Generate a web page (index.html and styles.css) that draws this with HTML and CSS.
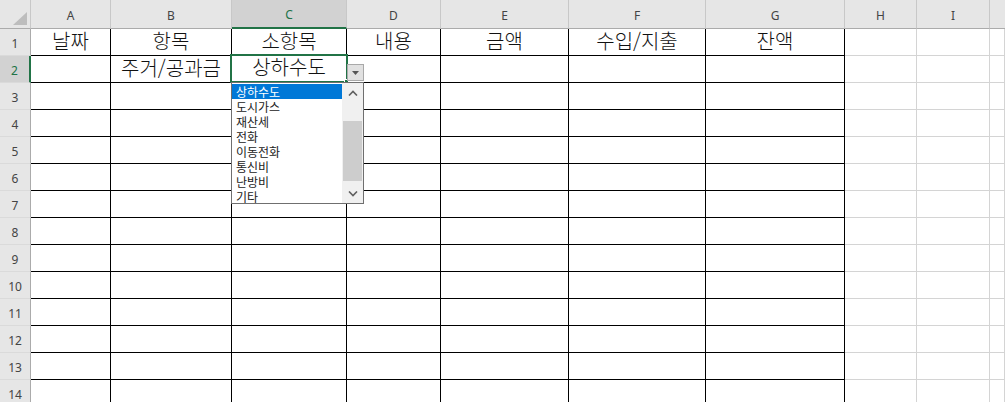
FILE: index.html
```html
<!DOCTYPE html>
<html lang="ko">
<head>
<meta charset="utf-8">
<link rel="stylesheet" href="styles.css">
</head>
<body>
<div class="sheet">
  <div class="row hdrow">
    <div class="corner"><svg width="14" height="13" viewBox="0 0 14 13"><polygon points="14,0 14,13 0,13" fill="#bdbdbd"/></svg></div>
    <div class="ch">A</div><div class="ch">B</div><div class="ch sel">C</div><div class="ch">D</div><div class="ch">E</div><div class="ch">F</div><div class="ch">G</div><div class="ch">H</div><div class="ch">I</div><div class="ch last"></div>
  </div>
  <div class="row">
    <div class="rh">1</div>
    <div class="c t">날짜</div><div class="c t">항목</div><div class="c t">소항목</div><div class="c t">내용</div><div class="c t">금액</div><div class="c t">수입/지출</div><div class="c t">잔액</div><div class="c"></div><div class="c"></div><div class="c"></div>
  </div>
  <div class="row">
    <div class="rh rsel">2</div>
    <div class="c t"></div><div class="c t">주거/공과금</div><div class="c t up">상하수도</div><div class="c t"></div><div class="c t"></div><div class="c t"></div><div class="c t"></div><div class="c"></div><div class="c"></div><div class="c"></div>
  </div>
  <div class="row"><div class="rh">3</div><div class="c t"></div><div class="c t"></div><div class="c t"></div><div class="c t"></div><div class="c t"></div><div class="c t"></div><div class="c t"></div><div class="c"></div><div class="c"></div><div class="c"></div></div>
  <div class="row"><div class="rh">4</div><div class="c t"></div><div class="c t"></div><div class="c t"></div><div class="c t"></div><div class="c t"></div><div class="c t"></div><div class="c t"></div><div class="c"></div><div class="c"></div><div class="c"></div></div>
  <div class="row"><div class="rh">5</div><div class="c t"></div><div class="c t"></div><div class="c t"></div><div class="c t"></div><div class="c t"></div><div class="c t"></div><div class="c t"></div><div class="c"></div><div class="c"></div><div class="c"></div></div>
  <div class="row"><div class="rh">6</div><div class="c t"></div><div class="c t"></div><div class="c t"></div><div class="c t"></div><div class="c t"></div><div class="c t"></div><div class="c t"></div><div class="c"></div><div class="c"></div><div class="c"></div></div>
  <div class="row"><div class="rh">7</div><div class="c t"></div><div class="c t"></div><div class="c t"></div><div class="c t"></div><div class="c t"></div><div class="c t"></div><div class="c t"></div><div class="c"></div><div class="c"></div><div class="c"></div></div>
  <div class="row"><div class="rh">8</div><div class="c t"></div><div class="c t"></div><div class="c t"></div><div class="c t"></div><div class="c t"></div><div class="c t"></div><div class="c t"></div><div class="c"></div><div class="c"></div><div class="c"></div></div>
  <div class="row"><div class="rh">9</div><div class="c t"></div><div class="c t"></div><div class="c t"></div><div class="c t"></div><div class="c t"></div><div class="c t"></div><div class="c t"></div><div class="c"></div><div class="c"></div><div class="c"></div></div>
  <div class="row"><div class="rh">10</div><div class="c t"></div><div class="c t"></div><div class="c t"></div><div class="c t"></div><div class="c t"></div><div class="c t"></div><div class="c t"></div><div class="c"></div><div class="c"></div><div class="c"></div></div>
  <div class="row"><div class="rh">11</div><div class="c t"></div><div class="c t"></div><div class="c t"></div><div class="c t"></div><div class="c t"></div><div class="c t"></div><div class="c t"></div><div class="c"></div><div class="c"></div><div class="c"></div></div>
  <div class="row"><div class="rh">12</div><div class="c t"></div><div class="c t"></div><div class="c t"></div><div class="c t"></div><div class="c t"></div><div class="c t"></div><div class="c t"></div><div class="c"></div><div class="c"></div><div class="c"></div></div>
  <div class="row"><div class="rh">13</div><div class="c t"></div><div class="c t"></div><div class="c t"></div><div class="c t"></div><div class="c t"></div><div class="c t"></div><div class="c t"></div><div class="c"></div><div class="c"></div><div class="c"></div></div>
  <div class="row"><div class="rh">14</div><div class="c t"></div><div class="c t"></div><div class="c t"></div><div class="c t"></div><div class="c t"></div><div class="c t"></div><div class="c t"></div><div class="c"></div><div class="c"></div><div class="c"></div></div>

  <div class="selbox"></div>
  <div class="handle"></div>
  <div class="ddbtn"><svg width="7" height="4" viewBox="0 0 7 4"><polygon points="0,0 7,0 3.5,4" fill="#555"/></svg></div>
  <div class="ddlist">
    <div class="items">
      <div class="item on">상하수도</div>
      <div class="item">도시가스</div>
      <div class="item">재산세</div>
      <div class="item">전화</div>
      <div class="item">이동전화</div>
      <div class="item">통신비</div>
      <div class="item">난방비</div>
      <div class="item">기타</div>
    </div>
    <div class="sbar">
      <div class="sbtn"><svg width="10" height="6" viewBox="0 0 10 6"><polyline points="1,5.5 5,1.5 9,5.5" fill="none" stroke="#606060" stroke-width="1.6"/></svg></div>
      <div class="track"><div class="gap1"></div><div class="thumb"></div><div class="gap2"></div></div>
      <div class="sbtn"><svg width="10" height="6" viewBox="0 0 10 6"><polyline points="1,0.5 5,4.5 9,0.5" fill="none" stroke="#606060" stroke-width="1.6"/></svg></div>
    </div>
  </div>
</div>
</body>
</html>
```

FILE: styles.css
```css
* { box-sizing: border-box; }
html, body { margin: 0; padding: 0; background: #fff; }
body { width: 1005px; height: 402px; overflow: hidden; }

.sheet {
  position: relative;
  width: 1005px;
  font-family: "Noto Sans CJK KR", "Noto Sans", sans-serif;
}

.row {
  display: grid;
  grid-template-columns: 31px 80px 121px 115px 94px 128px 137px 139px 72px 73px 1fr;
  height: 27px;
}
.hdrow { height: 29px; }

.corner {
  background: #e6e6e6;
  border-right: 1px solid #c8c8c8;
  border-bottom: 1px solid #ababab;
  display: flex;
  align-items: flex-end;
  justify-content: flex-end;
  padding: 0 3px 3px 0;
}
.ch {
  background: #e6e6e6;
  border-right: 1px solid #c8c8c8;
  border-bottom: 1px solid #ababab;
  display: flex;
  align-items: center;
  justify-content: center;
  font-family: "Noto Sans", "Liberation Sans", sans-serif;
  font-size: 12px;
  color: #444;
  padding-top: 2px;
}
.ch.sel {
  background: #d2d2d2;
  color: #217346;
  border-bottom: 2px solid #217346;
}
.ch.last { border-right: none; }

.rh {
  background: #e6e6e6;
  border-right: 1px solid #ababab;
  border-bottom: 1px solid #dadada;
  display: flex;
  align-items: center;
  justify-content: center;
  font-family: "Noto Sans", "Liberation Sans", sans-serif;
  font-size: 12px;
  color: #444;
  padding-top: 3px;
}
.rh.rsel {
  background: #d2d2d2;
  color: #217346;
  border-right: 2px solid #217346;
}

.c {
  border-right: 1px solid #d4d4d4;
  border-bottom: 1px solid #d4d4d4;
  display: flex;
  align-items: center;
  justify-content: center;
  font-size: 20px;
  font-weight: 300;
  color: #111;
  line-height: 1;
  white-space: nowrap;
  padding-bottom: 3px;
}
.c.t {
  border-right-color: #000;
  border-bottom-color: #000;
}
.c.up { padding-bottom: 4px; }

.selbox {
  position: absolute;
  left: 230px;
  top: 54px;
  width: 118px;
  height: 29px;
  border: 2px solid #217346;
}
.handle {
  position: absolute;
  left: 344px;
  top: 79px;
  width: 5px;
  height: 5px;
  background: #217346;
  border: 1px solid #fff;
}

.ddbtn {
  position: absolute;
  left: 347px;
  top: 64px;
  width: 17px;
  height: 17px;
  background: #e1e1e1;
  border: 1px solid #a9a9a9;
  display: flex;
  align-items: center;
  justify-content: center;
  padding-top: 1px;
}

.ddlist {
  position: absolute;
  left: 231px;
  top: 82px;
  width: 133px;
  height: 122px;
  background: #fff;
  border: 1px solid #6f6f6f;
  display: flex;
}
.items {
  width: 110px;
  padding-top: 1px;
}
.item {
  height: 15px;
  line-height: 15px;
  padding-left: 4px;
  font-size: 12px;
  color: #222;
  white-space: nowrap;
  overflow: hidden;
}
.item.on {
  background: #0078d7;
  color: #fff;
}
.sbar {
  flex: 1;
  background: #f0f0f0;
  display: flex;
  flex-direction: column;
}
.sbtn {
  height: 19px;
  display: flex;
  align-items: center;
  justify-content: center;
}
.track {
  flex: 1;
  display: flex;
  flex-direction: column;
  padding: 0 1px;
}
.gap1 { height: 19px; }
.thumb { height: 60px; background: #cdcdcd; }
.gap2 { flex: 1; }
```
